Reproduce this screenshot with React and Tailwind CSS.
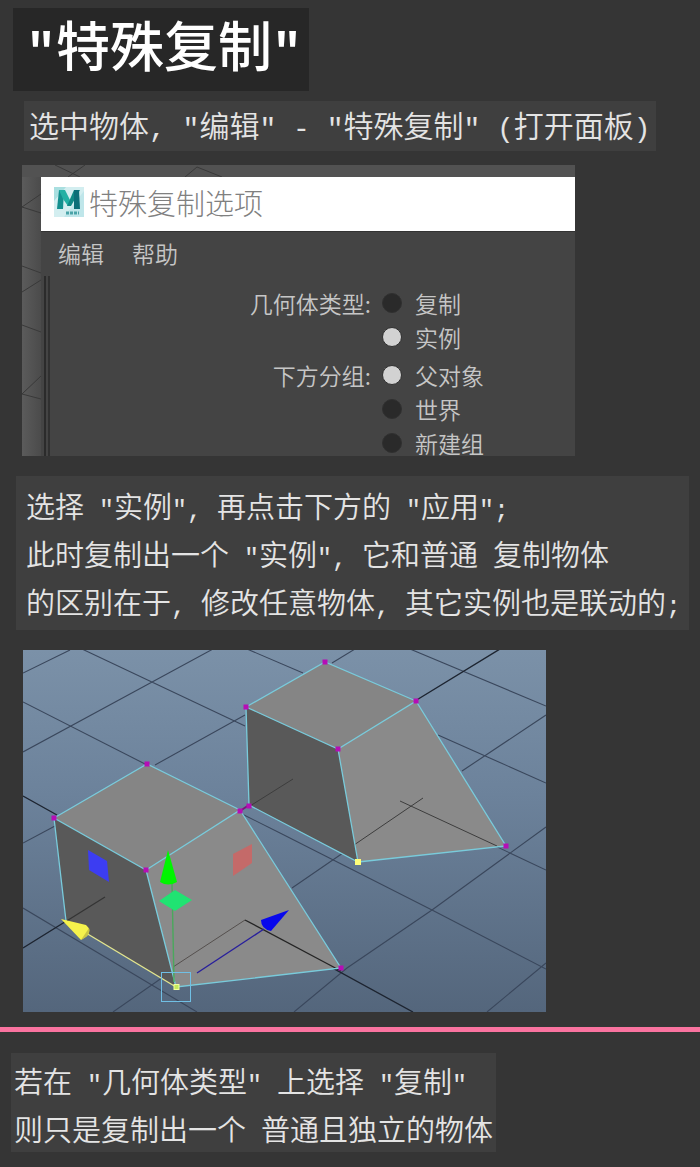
import React from "react";

const CJK = "font-['Noto_Sans_CJK_SC',sans-serif]";

/* Chinese runs use the sans face; punctuation and spaces use a fixed-width face. */
function Mixed({ text, latin }) {
  const runs = text.match(/[\x20-\x7e]+|[^\x20-\x7e]+/g) || [];
  return runs.map((run, i) =>
    /^[\x20-\x7e]/.test(run) ? (
      <span key={i} className={`font-['Liberation_Mono',monospace] leading-none ${latin}`}>
        {run}
      </span>
    ) : (
      run
    )
  );
}

function MayaIcon() {
  return (
    <svg viewBox="0 0 30 30" className="size-[30px] shrink-0" aria-hidden="true">
      <rect width="30" height="30" fill="#d3eef0" />
      <path d="M0 0H12L0 14Z" fill="#a9dfe0" />
      <path d="M30 4V30H10Z" fill="#bfe6ea" />
      <path d="M5 3H10L9 22H3Z" fill="#138f8e" />
      <path d="M5 3H11L16 13L14 19L9 12Z" fill="#22b0a4" />
      <path d="M20 3H26L17 19H13Z" fill="#0f8a86" />
      <path d="M20 3H25L26 22H20Z" fill="#0b6f78" />
      <path d="M12 26H25" stroke="#4aa3a8" strokeWidth="3" strokeDasharray="3 1" />
    </svg>
  );
}

function PanelBackdrop() {
  return (
    <svg
      viewBox="0 0 553 291"
      preserveAspectRatio="xMinYMin slice"
      className="absolute inset-0 h-full w-full"
      aria-hidden="true"
    >
      <defs>
        <linearGradient id="edge" x1="0" x2="19" gradientUnits="userSpaceOnUse">
          <stop offset="0" stopColor="#5b5b5b" />
          <stop offset="1" stopColor="#4b4b4b" />
        </linearGradient>
      </defs>
      <rect width="553" height="291" fill="#525252" />
      <rect y="12" width="19" height="279" fill="url(#edge)" />
      <path
        d="M33 0L58 12M63 0L46 12M163 12L175 2L200 12M0 42L19 29M0 42L19 48M0 101L19 108M0 127L19 115M0 160L19 167M0 229L19 211M0 229L19 234"
        fill="none"
        stroke="#393939"
      />
    </svg>
  );
}

function Choice({ name, label, checked }) {
  return (
    <label className="flex h-[34px] items-center gap-[13px]">
      <input
        type="radio"
        name={name}
        defaultChecked={checked}
        className="size-5 appearance-none rounded-full border border-[#303030] bg-[#2a2a2a] checked:bg-[#d2d2d2]"
      />
      <span className="leading-[34px]">{label}</span>
    </label>
  );
}

function ChoiceGroup({ name, title, options, selected }) {
  return (
    <div role="radiogroup" aria-label={title} className="flex gap-[11px]">
      <span className="w-[321px] text-right leading-[34px]">{title}:</span>
      <div>
        {options.map((o) => (
          <Choice key={o} name={name} label={o} checked={o === selected} />
        ))}
      </div>
    </div>
  );
}

function OptionsPanel() {
  return (
    <section className="relative ml-[22px] h-[291px] max-w-[553px] overflow-hidden pt-3 pl-[19px]">
      <PanelBackdrop />
      <div className="relative h-full bg-[#444444] text-[23px] font-[350] text-[#c6c6c6]">
        <header className="flex h-[54px] items-start gap-[5px] bg-white pt-[10px] pl-[13px]">
          <MayaIcon />
          <h2 className="text-[29px] leading-[30px] font-light text-[#808080]">特殊复制选项</h2>
        </header>
        <nav className="flex h-[45px] items-start gap-[28px] border-t border-[#333333] pt-1 pl-[17px] leading-[34px]">
          <button type="button">编辑</button>
          <button type="button">帮助</button>
        </nav>
        <div className="ml-[3px] border-l-2 border-[#2b2b2b] pl-[2px]">
          <div className="flex flex-col gap-1 border-l-2 border-[#303030] pt-[10px] pb-8">
            <ChoiceGroup name="type" title="几何体类型" options={["复制", "实例"]} selected="实例" />
            <ChoiceGroup
              name="parent"
              title="下方分组"
              options={["父对象", "世界", "新建组"]}
              selected="父对象"
            />
          </div>
        </div>
      </div>
    </section>
  );
}

function Vertices({ points, fill }) {
  return points.map(([x, y]) => (
    <rect key={`${x}-${y}`} x={x - 2.5} y={y - 2.5} width="5" height="5" fill={fill} />
  ));
}

function Scene() {
  return (
    <svg
      viewBox="23 650 523 362"
      className="ml-[23px] block w-full max-w-[523px]"
      role="img"
    >
      <defs>
        <linearGradient id="sky" x1="0" y1="0" x2="0" y2="1">
          <stop offset="0" stopColor="#7b91a8" />
          <stop offset="0.4" stopColor="#6c829b" />
          <stop offset="1" stopColor="#54667c" />
        </linearGradient>
      </defs>
      <rect x="23" y="650" width="523" height="362" fill="url(#sky)" />

      {/* ground grid */}
      <path
        d="M23 673L70 650M82 649L245 726M23 752L213 649M23 702L147 765M155 765L245 715M247 649L303 673M23 843L55 826M23 908L197 1012M113 1012L245 920M240 813L280 833L432 910L546 969M355 649L332 663M410 649L546 706M438 735L546 783M546 715L462 771M400 801L546 870M423 798L292 888M546 827L432 910L347 968L294 1012M546 963L487 1012"
        fill="none"
        stroke="#3a475c"
        strokeWidth="1.1"
      />
      <path
        d="M23 796L57 815M23 948L105 897M245 920L413 1012M500 649L415 701"
        fill="none"
        stroke="#1d2430"
        strokeWidth="1.4"
      />

      {/* rear solid */}
      <path d="M246 707L325 662L416 701L338 749Z" fill="#858585" />
      <path d="M246 707L338 749L358 862L249 805Z" fill="#595959" />
      <path d="M338 749L416 701L506 846L358 862Z" fill="#8a8a8a" />
      <path d="M250 806L293 779M400 801L497 846M423 798L354 845" fill="none" stroke="#3d3d3d" />
      <path
        d="M246 707L325 662L416 701L338 749ZM246 707L249 805L358 862L338 749M416 701L506 846L358 862"
        fill="none"
        stroke="#79cbdb"
        strokeWidth="1.3"
      />

      {/* front solid */}
      <path d="M54 818L147 764L240 810L146 870Z" fill="#858585" />
      <path d="M54 818L146 870L176 987L66 921Z" fill="#595959" />
      <path d="M146 870L240 810L341 968L176 987Z" fill="#8a8a8a" />
      <path d="M65 922L105 897" stroke="#343434" strokeWidth="1.2" />
      <path d="M173 967L245 920" stroke="#55504e" />
      <path d="M245 920L341 971" stroke="#242424" strokeWidth="1.3" />
      <path
        d="M54 818L147 764L240 810L146 870ZM54 818L66 921M146 870L176 987L341 968L240 810"
        fill="none"
        stroke="#79cbdb"
        strokeWidth="1.3"
      />
      <path d="M66 921L176 987" stroke="#e3e68e" strokeWidth="1.4" />
      <path d="M240 811L249 805" stroke="#801080" strokeWidth="2" />

      {/* move manipulator */}
      <path d="M88 850L107 861L109 882L89 870Z" fill="#3c3df2" />
      <path d="M233 854L252 844L252 863L233 876Z" fill="#c46a69" />
      <path d="M172 884L174 982" stroke="#4aa85c" strokeWidth="1.4" />
      <path d="M168 850L160 882Q168 887 177 882Z" fill="#00f500" />
      <path d="M159 901L175 890L192 900L175 911Z" fill="#20e372" />
      <path d="M197 973L264 929" stroke="#281f9c" strokeWidth="1.4" />
      <path d="M289 910L261 920Q261 929 271 931Z" fill="#0808ec" />
      <path d="M61 919L86 925Q92 930 87 936L81 940Z" fill="#f5f24c" />
      <path d="M89 928L81 940L86 937Q91 932 89 928Z" fill="#c8c545" />
      <rect x="161.5" y="972.5" width="29" height="29" fill="none" stroke="#70bfe4" />

      <Vertices
        fill="#b60db6"
        points={[
          [246, 707], [325, 662], [416, 701], [338, 749], [506, 846], [249, 806],
          [54, 818], [147, 764], [240, 811], [146, 870], [341, 968],
        ]}
      />
      <rect x="355" y="859" width="6" height="6" fill="#ffff7a" />
      <rect x="174" y="984.5" width="5" height="5" fill="#c5e95c" stroke="#f4ff9c" />
    </svg>
  );
}

export default function App() {
  return (
    <main className={`min-h-screen overflow-hidden bg-[#353535] pt-2 pb-[15px] whitespace-nowrap text-[#e4e4e4] ${CJK}`}>
      <h1 className="ml-[13px] h-[83px] w-fit bg-[#272727] pr-[7px] pl-[13px] text-[54px] leading-[72px] font-medium text-white">
        <Mixed text={'"特殊复制"'} latin="text-[50px] font-bold" />
      </h1>

      <p className="mt-[10px] ml-6 h-[50px] w-fit bg-[#3f3f3f] px-[5px] text-[30px] leading-[46px] font-[350]">
        <Mixed text={'选中物体, "编辑" - "特殊复制" (打开面板)'} latin="text-[28px]" />
      </p>

      <div className="mt-[14px]">
        <OptionsPanel />
      </div>

      <div className="mt-5 ml-4 w-fit bg-[#3f3f3f] py-[5px] pr-[8px] pl-[10px] text-[29px] leading-[48px] font-[350]">
        <p><Mixed text={'选择 "实例", 再点击下方的 "应用";'} latin="text-[25px]" /></p>
        <p><Mixed text={'此时复制出一个 "实例", 它和普通 复制物体'} latin="text-[25px]" /></p>
        <p><Mixed text={"的区别在于, 修改任意物体, 其它实例也是联动的;"} latin="text-[25px]" /></p>
      </div>

      <div className="mt-5">
        <Scene />
      </div>

      <hr className="mt-[15px] h-[5px] border-0 bg-[#f9739f]" />

      <div className="mt-[21px] ml-[11px] w-fit bg-[#3f3f3f] pt-[3px] pr-[3px] pl-[3px] text-[29px] leading-[48px] font-[350]">
        <p><Mixed text={'若在 "几何体类型" 上选择 "复制"'} latin="text-[25px]" /></p>
        <p><Mixed text={"则只是复制出一个 普通且独立的物体"} latin="text-[25px]" /></p>
      </div>
    </main>
  );
}
